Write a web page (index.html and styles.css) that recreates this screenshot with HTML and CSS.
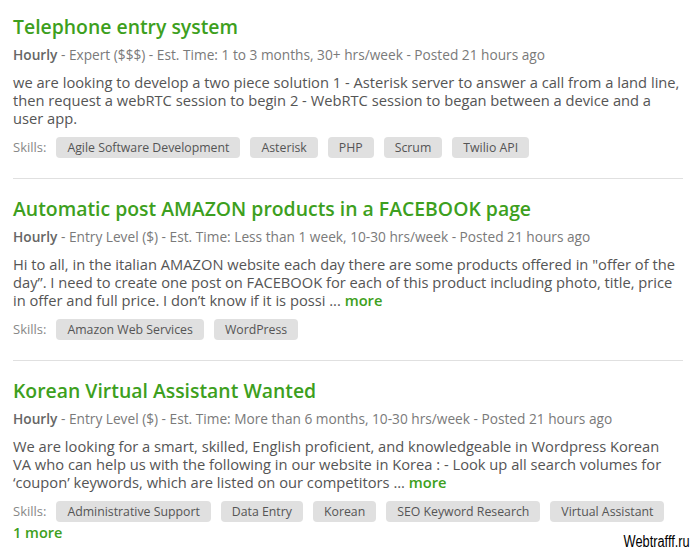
FILE: index.html
```html
<!DOCTYPE html>
<html lang="en">
<head>
<meta charset="utf-8">
<title>Jobs</title>
<link rel="stylesheet" href="styles.css">
</head>
<body>
<main class="feed">
  <section class="job">
    <h2 class="job-title">Telephone entry system</h2>
    <p class="job-meta"><strong>Hourly</strong> - Expert ($$$) - Est. Time: 1 to 3 months, 30+ hrs/week - Posted 21 hours ago</p>
    <p class="job-desc">we are looking to develop a two piece solution 1 - Asterisk server to answer a call from a land line,<br>then request a webRTC session to begin 2 - WebRTC session to began between a device and a<br>user app.</p>
    <div class="skills">
      <span class="skills-label">Skills:</span>
      <span class="chip">Agile Software Development</span>
      <span class="chip">Asterisk</span>
      <span class="chip">PHP</span>
      <span class="chip">Scrum</span>
      <span class="chip">Twilio API</span>
    </div>
  </section>
  <section class="job">
    <h2 class="job-title">Automatic post AMAZON products in a FACEBOOK page</h2>
    <p class="job-meta"><strong>Hourly</strong> - Entry Level ($) - Est. Time: Less than 1 week, 10-30 hrs/week - Posted 21 hours ago</p>
    <p class="job-desc">Hi to all, in the italian AMAZON website each day there are some products offered in "offer of the<br>day”. I need to create one post on FACEBOOK for each of this product including photo, title, price<br>in offer and full price. I don’t know if it is possi ... <a class="more" href="#">more</a></p>
    <div class="skills">
      <span class="skills-label">Skills:</span>
      <span class="chip">Amazon Web Services</span>
      <span class="chip">WordPress</span>
    </div>
  </section>
  <section class="job last">
    <h2 class="job-title">Korean Virtual Assistant Wanted</h2>
    <p class="job-meta"><strong>Hourly</strong> - Entry Level ($) - Est. Time: More than 6 months, 10-30 hrs/week - Posted 21 hours ago</p>
    <p class="job-desc">We are looking for a smart, skilled, English proficient, and knowledgeable in Wordpress Korean<br>VA who can help us with the following in our website in Korea : - Look up all search volumes for<br>‘coupon’ keywords, which are listed on our competitors ... <a class="more" href="#">more</a></p>
    <div class="skills">
      <span class="skills-label">Skills:</span>
      <span class="chip">Administrative Support</span>
      <span class="chip">Data Entry</span>
      <span class="chip">Korean</span>
      <span class="chip">SEO Keyword Research</span>
      <span class="chip">Virtual Assistant</span>
      <a class="more-skills" href="#">1 more</a>
    </div>
  </section>
</main>
<div class="watermark">Webtrafff.ru</div>
</body>
</html>
```
FILE: styles.css
```css
html, body {
  margin: 0;
  padding: 0;
  background: #fff;
}
body {
  font-family: "Open Sans", "Liberation Sans", sans-serif;
  color: #656565;
  width: 698px;
  height: 553px;
  overflow: hidden;
  position: relative;
}
.feed {
  padding: 14px 15px 0 13px;
}
.job {
  border-bottom: 1px solid #e0e0e0;
  padding-bottom: 20px;
  margin-bottom: 17px;
}
.job.last {
  border-bottom: none;
}
.job-title {
  margin: 0;
  font-size: 19.4px;
  line-height: 26px;
  font-weight: 600;
  color: #3d9f20;
}
.job-meta {
  margin: 6px 0 0;
  font-size: 13.7px;
  line-height: 18px;
  color: #7a7a7a;
}
.job-meta strong {
  font-weight: 600;
  color: #666;
}
.job-desc {
  margin: 9px -10px 0 0;
  font-size: 14.7px;
  line-height: 18px;
  color: #555;
}
.more, .more-skills {
  color: #3d9f20;
  text-decoration: none;
  font-weight: 600;
}
.skills {
  margin-top: 10px;
  display: flex;
  flex-wrap: wrap;
  align-items: center;
  column-gap: 10px;
  font-size: 12.3px;
}
.skills-label {
  color: #888;
  font-size: 13px;
  line-height: 21px;
}
.chip {
  background: #e0e0e0;
  color: #555;
  border-radius: 4px;
  padding: 0 11px;
  line-height: 21px;
}
.more-skills {
  font-size: 14.5px;
  line-height: 21px;
}
.watermark {
  position: absolute;
  right: 8px;
  bottom: 2px;
  font-family: "Liberation Sans", sans-serif;
  font-size: 16px;
  color: #000;
  transform: scaleX(0.8);
  transform-origin: right center;
}
```
